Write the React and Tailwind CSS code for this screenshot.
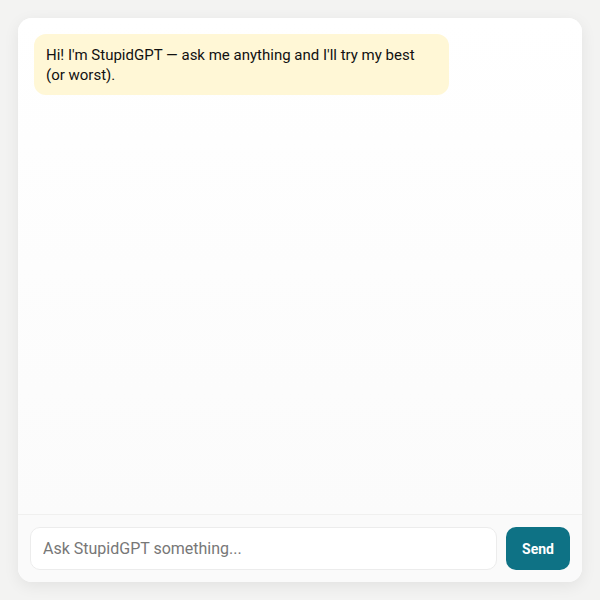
import React, { useState } from "react";

const App = () => {
  const [draft, setDraft] = useState("");

  return (
    <div className="flex h-[600px] w-full bg-[#f3f3f2] p-[18px] font-['Roboto',sans-serif]">
      <div className="flex flex-1 flex-col overflow-hidden rounded-[14px] bg-white shadow-[0_4px_16px_rgba(0,0,0,0.07)]">
        <div className="flex flex-1 flex-col bg-[linear-gradient(180deg,#ffffff_0%,#fbfbfb_100%)] p-4">
          <div className="max-w-[415px] rounded-xl bg-[#fff7d6] px-3 pb-[10px] pt-[11px] text-[15px] leading-5 text-[#111]">
            Hi! I'm StupidGPT — ask me anything and I'll try my best (or worst).
          </div>
        </div>

        <div className="flex gap-[9px] border-t border-[#f0f0ef] bg-[#fafafa] px-3 pb-3 pt-3">
          <input
            type="text"
            value={draft}
            onChange={(e) => setDraft(e.target.value)}
            placeholder="Ask StupidGPT something..."
            className="h-[43px] flex-1 rounded-[10px] border border-[#ececec] bg-white px-3 text-base text-[#222] outline-none placeholder:text-[#777]"
          />
          <button
            type="button"
            className="h-[43px] w-[64px] rounded-[10px] bg-[#0e7285] text-sm font-bold text-white"
          >
            Send
          </button>
        </div>
      </div>
    </div>
  );
};

export default App;
